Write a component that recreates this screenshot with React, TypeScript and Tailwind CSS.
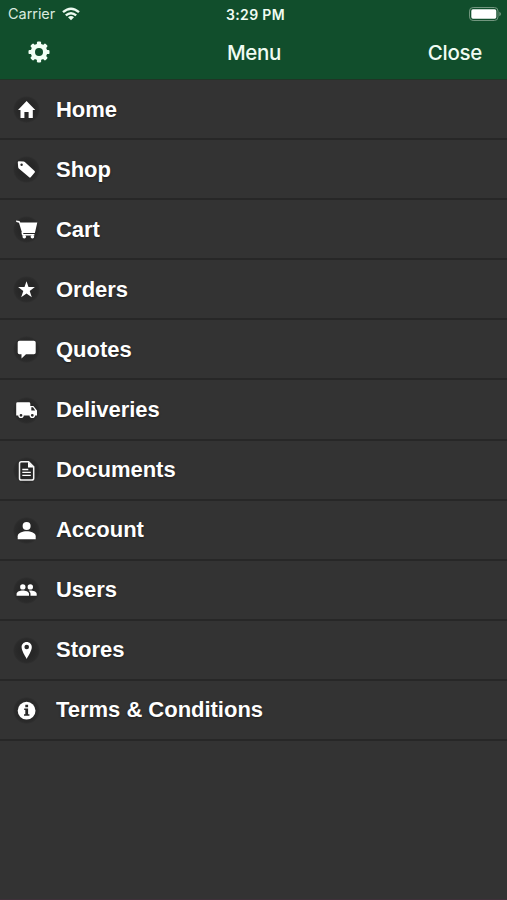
import type { ReactNode } from 'react';

type Item = { label: string; icon: ReactNode };

const DARK = '#282828';

const items: Item[] = [
  { label: 'Home', icon: <path d="M13.6 4.9 22.3 13.9H19.8V21.9H15.6V15.9H11.4V21.9H7.5V13.9H5Z" /> },
  {
    label: 'Shop',
    icon: (
      <>
        <path d="M5.8 5.2 10.7 5.5Q11.3 5.6 11.8 6L21.6 15Q22.3 15.7 21.7 16.4L17.7 21.2Q17 22 16.2 21.3L5.8 12.4Q5.3 12 5.2 11.3L4.8 6.2Q4.8 5.2 5.8 5.2Z" />
        <circle cx="8.6" cy="8.7" r="1.2" fill={DARK} />
      </>
    ),
  },
  {
    label: 'Cart',
    icon: (
      <>
        <path d="M3 4.4 6.5 5 7.3 6.4H24.3L21.9 16.9H9.1L6 6.7 3.3 6Z" />
        <path d="M9.2 16 9.7 18.8H21.4" fill="none" stroke="#fff" strokeWidth="1.6" />
        <circle cx="11.3" cy="20.7" r="1.8" />
        <circle cx="19.4" cy="20.7" r="1.8" />
      </>
    ),
  },
  { label: 'Orders', icon: <path d="M13.5 5.2 15.5 11.1H21.9L16.7 14.9 18.8 21.2 13.5 17.4 8.2 21.2 10.3 14.9 5.1 11.1H11.5Z" /> },
  { label: 'Quotes', icon: <path d="M6.5 4.8H20.9Q22.7 4.8 22.7 6.6V16.5Q22.7 18.3 20.9 18.3H13L8.5 22.4V18.3H6.5Q4.7 18.3 4.7 16.5V6.6Q4.7 4.8 6.5 4.8Z" /> },
  {
    label: 'Deliveries',
    icon: (
      <>
        <path d="M4.5 5.3H16Q17.3 5.3 17.3 6.7V9H20.4L24 13.6V18.5H3.2V6.7Q3.2 5.3 4.5 5.3Z" />
        <path d="M18.3 10.2H20L22.2 13.4H18.3Z" fill={DARK} />
        <circle cx="8" cy="18.3" r="2.1" fill={DARK} stroke="#fff" strokeWidth="1.4" />
        <circle cx="19.3" cy="18.3" r="2.1" fill={DARK} stroke="#fff" strokeWidth="1.4" />
      </>
    ),
  },
  {
    label: 'Documents',
    icon: (
      <>
        <path d="M8.4 4.8H15.6L20.7 9.9V21.2Q20.7 23.1 18.8 23.1H8.4Q6.5 23.1 6.5 21.2V6.7Q6.5 4.8 8.4 4.8Z" fill="none" stroke="#f4f4f4" strokeWidth="1.5" />
        <path d="M15 4.7V10.5H20.8Z" />
        <path d="M9.3 12.5H15.3M9.3 15.4H17.8M9.3 18.4H17.8" stroke="#fff" strokeWidth="1.3" />
      </>
    ),
  },
  {
    label: 'Account',
    icon: (
      <>
        <circle cx="13.6" cy="9" r="4" />
        <path d="M4.7 22.2V19.2C4.7 16 9.6 14.3 13.7 14.3S22.7 16 22.7 19.2V22.2Z" />
      </>
    ),
  },
  {
    label: 'Users',
    icon: (
      <>
        <circle cx="9.8" cy="9.9" r="2.7" />
        <circle cx="17.3" cy="9.9" r="2.7" />
        <path d="M3.6 18.8V17C3.6 14.7 7.2 13.6 9.8 13.6S16 14.7 16 17V18.8Z" />
        <path d="M15.8 13.7C19 13.3 23.7 14.5 23.7 17V18.8H17.5V17C17.5 15.5 16.9 14.5 15.8 13.7Z" />
      </>
    ),
  },
  {
    label: 'Stores',
    icon: (
      <>
        <path d="M13.7 5C10.8 5 8.6 7.2 8.6 10.1 8.6 13.6 12 19 13.7 21.9 15.4 19 18.8 13.6 18.8 10.1 18.8 7.2 16.6 5 13.7 5Z" />
        <circle cx="13.7" cy="10" r="2.3" fill={DARK} />
      </>
    ),
  },
  {
    label: 'Terms & Conditions',
    icon: (
      <>
        <circle cx="13.6" cy="13.7" r="8.9" />
        <path d="M12.3 7.8H15.1V10.3H12.3ZM11.2 11.5H15.1V17.2H16.4V18.7H11V17.2H12.3V13H11.2Z" fill={DARK} />
      </>
    ),
  },
];

function Gear() {
  return (
    <svg className="h-[22px] w-[22px]" viewBox="-11 -11 22 22" fill="#f2fff5">
      {[0, 45, 90, 135].map((angle) => (
        <rect key={angle} x="-2.1" y="-10.5" width="4.2" height="21" rx="1.2" transform={`rotate(${angle})`} />
      ))}
      <circle r="8.3" />
      <circle r="4" fill="#114e2c" />
    </svg>
  );
}

function Wifi() {
  return (
    <svg className="h-[14px] w-[18px]" viewBox="0 0 18 14" fill="none" stroke="#ecfaf0" strokeWidth="2.4">
      <path d="M1 5.2Q9-1.7 17 5.2M3.8 8.4Q9 4 14.2 8.4" />
      <path d="M6 10.3Q9 7.9 12 10.3L9 13.3Z" fill="#ecfaf0" stroke="none" />
    </svg>
  );
}

function Battery() {
  return (
    <svg className="h-[14px] w-[32px]" viewBox="0 0 32 14">
      <rect x=".5" y=".5" width="28.5" height="13" rx="3.6" fill="none" stroke="#72967f" />
      <rect x="2.3" y="2.3" width="25" height="9.4" rx="1.6" fill="#fff" />
      <path d="M30.3 4.8Q32 5.5 32 7T30.3 9.2Z" fill="#72967f" />
    </svg>
  );
}

export default function App() {
  return (
    <div className="flex h-[900px] w-full flex-col overflow-hidden border-b border-[#40303a] bg-[#333333] font-['Liberation_Sans',Arial,sans-serif] text-white">
      <header className="h-[80px] shrink-0 border-b border-[#203526] bg-[#114e2c] font-[Inter,sans-serif] text-[#f0fcf3]">
        <div className="grid h-[27px] grid-cols-3 items-center pr-[6px] pl-[8px]">
          <div className="flex items-center gap-[7px] text-[#d9eadf]">
            <span className="text-[14.5px] tracking-[-0.05px]">Carrier</span>
            <Wifi />
          </div>
          <span className="pt-px pl-[2px] text-center text-[14px] font-semibold tracking-[0.35px]">3:29 PM</span>
          <div className="flex justify-end"><Battery /></div>
        </div>
        <div className="grid h-[50px] grid-cols-3 items-center pr-[25px] pl-[28px] text-[20.5px] font-medium tracking-[-0.3px]">
          <button className="justify-self-start" aria-label="Settings"><Gear /></button>
          <h1 className="pt-[2px] pr-[2px] text-center">Menu</h1>
          <button className="justify-self-end pt-[2px]">Close</button>
        </div>
      </header>
      <nav>
        {items.map(({ label, icon }) => (
          <a key={label} className="flex h-[60.1px] items-center border-b-2 border-[#272727] pt-px pl-[13px]">
            <span className="flex h-[27px] w-[27px] items-center justify-center rounded-full bg-[radial-gradient(circle,#272727_40%,#2b2b2b_62%,#333333_72%)]">
              <svg className="h-[27px] w-[27px]" viewBox="0 0 27 27" fill="#fff">{icon}</svg>
            </span>
            <span className="pl-4 text-[22px] leading-7 font-bold tracking-[-0.02px] [text-shadow:0_1px_2px_#1c1c1c]">{label}</span>
          </a>
        ))}
      </nav>
    </div>
  );
}
